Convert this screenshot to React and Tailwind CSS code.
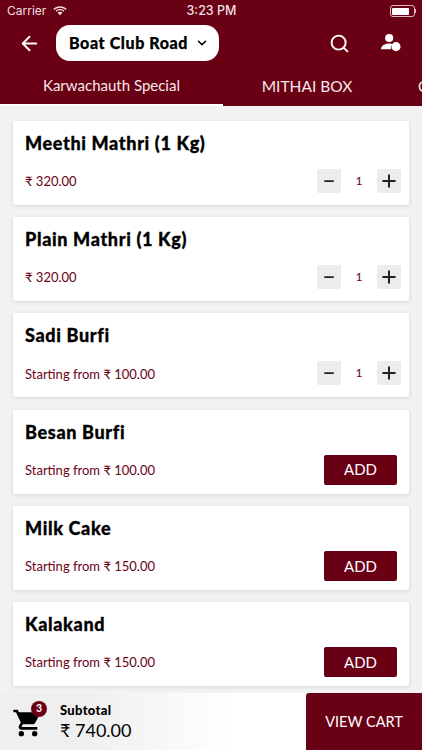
import React from "react";
import { ArrowLeft, ChevronDown, Search, Minus, Plus } from "lucide-react";

const items = [
  { name: "Meethi Mathri (1 Kg)", price: "₹ 320.00", qty: true },
  { name: "Plain Mathri (1 Kg)", price: "₹ 320.00", qty: true },
  { name: "Sadi Burfi", price: "Starting from ₹ 100.00", qty: true },
  { name: "Besan Burfi", price: "Starting from ₹ 100.00" },
  { name: "Milk Cake", price: "Starting from ₹ 150.00" },
  { name: "Kalakand", price: "Starting from ₹ 150.00" },
];

function Card({ name, price, qty }) {
  return (
    <div className="h-[84px] bg-white rounded-[2px] shadow-[0_1px_4px_rgba(0,0,0,0.12)] pl-3 pr-3 flex flex-col">
      <div className="h-[46px] pt-[10px] text-[18px] leading-[24px] font-black text-black tracking-[0.65px] [-webkit-text-stroke:0.3px_black] whitespace-nowrap">{name}</div>
      <div className="flex items-center justify-between h-[24px] mt-[2px]">
        <span className="mt-[2px] text-[13px] text-[#6a0014] whitespace-nowrap">{price}</span>
        {qty ? (
          <div className="flex items-center -mr-1">
            <button className="w-6 h-6 bg-[#ececec] rounded-[2px] flex items-center justify-center text-[#222]">
              <Minus size={14} strokeWidth={3} />
            </button>
            <span className="w-9 text-center text-[12px] text-[#6a0014]">1</span>
            <button className="w-6 h-6 bg-[#ececec] rounded-[2px] flex items-center justify-center text-[#222]">
              <Plus size={20} strokeWidth={2.4} />
            </button>
          </div>
        ) : (
          <button className="w-[73px] h-[30px] bg-[#6a0014] rounded-[2px] text-white text-[15px]">ADD</button>
        )}
      </div>
    </div>
  );
}

export default function App() {
  return (
    <div className="relative w-[422px] h-[750px] overflow-hidden bg-[#f2f2f2] font-['Lato',sans-serif]">
      <header className="h-[106px] bg-[#6a0014] text-white flex flex-col">
        <div className="h-[22px] flex items-center justify-between pl-[7px] pr-[6px] text-[12.5px] font-['Inter',sans-serif] text-[#f0dfe2]">
          <div className="flex items-center gap-[7px] w-[130px]">
            <span className="text-[12px]">Carrier</span>
            <svg width="14" height="10" viewBox="0 0 15 11" fill="currentColor">
              <path d="M7.5 2C10 2 12.2 3 13.8 4.5l1-1.1C12.9 1.6 10.3.4 7.5.4S2.100 1.600.2 3.400l1 1.100C2.800 3 5 2 7.500 2z" />
              <path d="M7.500 4.800c1.500 0 2.900.6 3.900 1.500l1-1.100C11.100 4 9.400 3.300 7.500 3.300S3.900 4 2.600 5.200l1 1.100c1-.9 2.400-1.500 3.900-1.500z" />
              <path d="M7.500 6.200c-1.100 0-2 .4-2.700 1.100l2.700 3 2.700-3c-.7-.7-1.600-1.100-2.700-1.100z" />
            </svg>
          </div>
          <span className="font-medium">3:23 PM</span>
          <div className="w-[130px] flex justify-end items-center">
            <div className="w-[25px] h-[12px] border border-[#d9bcc2] rounded-[3px] p-[1.5px]">
              <div className="w-[17px] h-full bg-white rounded-[1px]" />
            </div>
            <div className="w-[1.5px] h-[4px] bg-[#d9bcc2]" />
          </div>
        </div>
        <div className="h-[40px] flex items-center pl-[18px] pr-[20px] mt-[1px]">
          <ArrowLeft size={23} strokeWidth={2} className="shrink-0" />
          <div className="ml-[15px] w-[163px] h-[36px] bg-white rounded-[14px] flex items-center pl-[13px] gap-[7px] text-black">
            <span className="text-[16px] font-black tracking-[0.6px] [-webkit-text-stroke:0.25px_black] whitespace-nowrap">Boat Club Road</span>
            <ChevronDown size={14} strokeWidth={2.8} />
          </div>
          <Search size={21} strokeWidth={2.2} className="ml-auto mr-[30px]" />
          <svg width="22" height="20" viewBox="0 0 24 22" fill="currentColor">
            <circle cx="10" cy="5.500" r="4.500" />
            <path d="M1 18c0-4 4-6.500 9-6.500 1.500 0 2.800.2 4 .6-1.600 1.200-2.500 3.400-2 5.900z" />
            <circle cx="17.500" cy="15" r="5" />
          </svg>
        </div>
        <nav className="flex-1 flex text-[15px] items-stretch overflow-hidden whitespace-nowrap">
          <div className="w-[223px] shrink-0 border-b-2 border-white flex items-center justify-center pt-[4px] text-[#f7e8ea]">Karwachauth Special</div>
          <div className="w-[168px] shrink-0 flex items-center justify-center pt-[4px] text-[#f7e8ea] text-[15.5px]">MITHAI BOX</div>
          <div className="shrink-0 flex items-center pl-[27px] pt-[4px] text-[#f7e8ea]">C</div>
        </nav>
      </header>

      <main className="px-[13px] pt-[15px] flex flex-col gap-[12.2px] w-[396px] box-content">
        {items.map((it) => (
          <Card key={it.name} {...it} />
        ))}
      </main>

      <footer className="absolute bottom-0 left-0 w-full h-[57px] flex bg-gradient-to-r from-[#efefef] via-[#efefef] via-20% to-white to-55%">
        <div className="flex-1 flex items-center pl-[12px]">
          <div className="relative mt-[3px]">
            <svg width="32" height="32" viewBox="0 0 24 24" fill="#000">
              <path d="M1 2v2h2l3.600 7.590-1.350 2.450c-.16.280-.25.610-.25.960 0 1.100.9 2 2 2h12v-2H7.420c-.14 0-.25-.11-.25-.25l.03-.12.900-1.630h7.450c.750 0 1.410-.41 1.750-1.030l3.580-6.490A1 1 0 0 0 20 4H5.210l-.94-2H1z" />
              <circle cx="7" cy="20" r="2" />
              <circle cx="17" cy="20" r="2" />
            </svg>
            <span className="absolute -top-[6px] left-[19px] w-4 h-4 rounded-full bg-[#6a0014] text-white text-[10.5px] font-bold flex items-center justify-center">3</span>
          </div>
          <div className="ml-[16px] flex flex-col text-black mt-[2px]">
            <span className="text-[13px] leading-[14px] font-black tracking-[0.3px]">Subtotal</span>
            <span className="text-[18px] leading-[26px]">₹ 740.00</span>
          </div>
        </div>
        <button className="w-[116px] h-full bg-[#6a0014] rounded-tl-[3px] text-white text-[14.5px]">VIEW CART</button>
      </footer>
    </div>
  );
}
